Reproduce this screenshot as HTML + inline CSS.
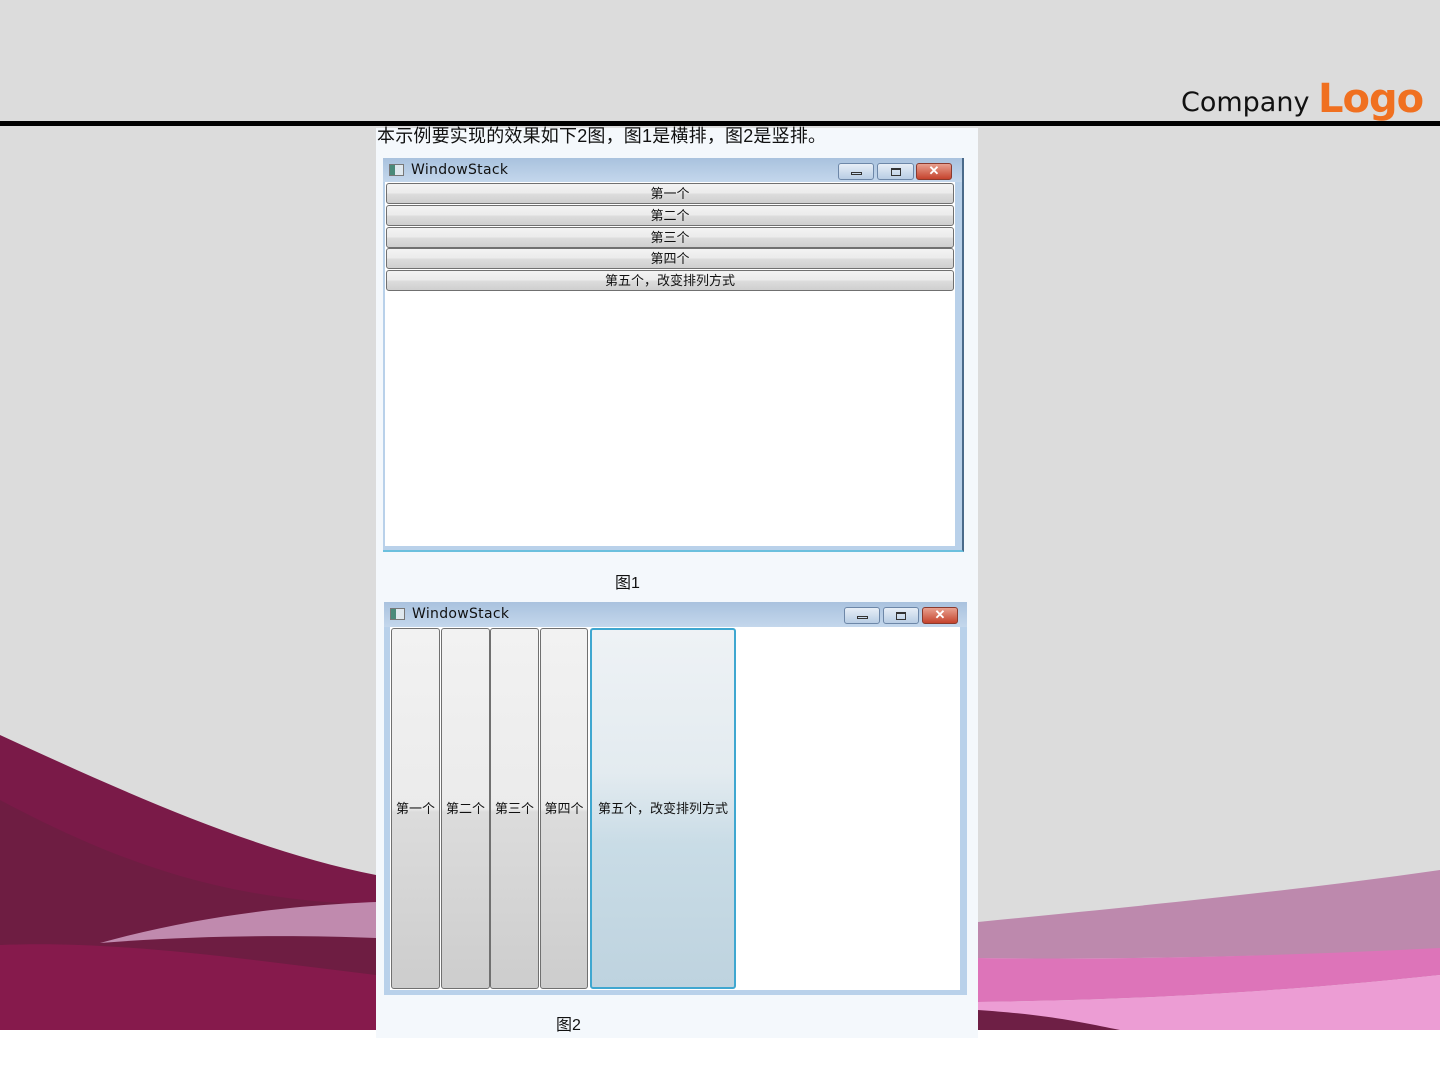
<!DOCTYPE html>
<html><head><meta charset="utf-8">
<style>
*{margin:0;padding:0;box-sizing:border-box}
body{width:1440px;height:1080px;position:relative;background:#fff;overflow:hidden;font-family:"Liberation Sans","Noto Sans CJK SC",sans-serif}
.abs{position:absolute}
.tb{position:absolute;left:0;right:0;top:0;height:24px;background:linear-gradient(#a9c2de,#c4d7ec)}
.ttl{position:absolute;left:28px;top:4px;font-size:14px;color:#111;font-family:"DejaVu Sans","Noto Sans CJK SC",sans-serif;letter-spacing:.3px}
.ico{position:absolute;left:6px;top:6px;width:15px;height:12px;border:1px solid #777;background:linear-gradient(90deg,#4a8a7a 40%,#dfe8ee 40%)}
.cb{position:absolute;top:5px;height:17px;border:1px solid #6d87a8;border-radius:3px;background:linear-gradient(#e7eef7,#b8cde4)}
.cb.x{background:linear-gradient(#e8a08f,#c5432d);border-color:#8a3a2e}
.hb{position:absolute;left:1px;right:1px;height:21px;border:1px solid #707070;border-radius:3px;background:linear-gradient(#f3f3f3 0%,#ebebeb 50%,#dddddd 51%,#cfcfcf 100%);font-size:13px;text-align:center;line-height:19px;color:#111}
.vb{position:absolute;top:1px;bottom:1px;border:1px solid #707070;border-radius:3px;background:linear-gradient(#f2f2f2,#ebebeb 50%,#dcdcdc 51%,#cdcdcd);font-size:13px;line-height:13px;color:#111;display:flex;align-items:center;justify-content:center;white-space:nowrap;overflow:hidden}
</style></head><body>
<div class="abs" style="left:0;top:0;width:1440px;height:1030px;background:#dcdcdc"></div>
<svg class="abs" style="left:0;top:0" width="1440" height="1080">
<path d="M0 735 C120 790 250 850 376 875 L376 1030 L0 1030Z" fill="#7a1a48"/>
<path d="M0 800 C150 880 250 900 376 905 L376 1030 L0 1030Z" fill="#6a2040" opacity=".7"/>
<path d="M100 943 C200 915 300 905 376 902 L376 938 C300 935 200 935 100 943Z" fill="#c08aae"/>
<path d="M0 945 C120 940 250 960 376 975 L376 1030 L0 1030Z" fill="#861a4c"/>
<path d="M978 922 C1150 905 1300 890 1440 870 L1440 950 C1300 955 1150 960 978 958Z" fill="#bd89ad"/>
<path d="M978 958 C1150 960 1300 955 1440 948 L1440 975 C1300 990 1150 1000 978 1002Z" fill="#dd74b9"/>
<path d="M978 1002 C1150 1000 1300 990 1440 975 L1440 1030 L978 1030Z" fill="#ec9dd4"/>
<path d="M978 1010 C1050 1015 1080 1022 1120 1030 L978 1030Z" fill="#6e1f45"/>
</svg>
<div class="abs" style="left:0;top:121px;width:1440px;height:5px;background:#000"></div>
<div class="abs" style="left:1181px;top:87px;font-size:27px;color:#111;font-family:'DejaVu Sans',sans-serif">Company</div>
<div class="abs" style="left:1318px;top:76px;font-size:40px;font-weight:bold;color:#f07020;font-family:'DejaVu Sans',sans-serif;letter-spacing:-1px">Logo</div>
<div class="abs" style="left:376px;top:128px;width:602px;height:910px;background:#f4f8fc"></div>
<div class="abs" style="left:377px;top:125px;font-size:18px;line-height:22px;letter-spacing:.2px;color:#111">本示例要实现的效果如下2图，图1是横排，图2是竖排。</div>

<div class="abs" style="left:383px;top:158px;width:581px;height:394px;background:#b9d1ea;border-right:2px solid #4a6a8a;border-bottom:2px solid #6cc0de">
<div class="tb"></div><div class="ico"></div><div class="ttl">WindowStack</div>
<div class="cb" style="left:455px;width:36px"><div class="abs" style="left:12px;top:8px;width:11px;height:3px;border:1px solid #333"></div></div>
<div class="cb" style="left:494px;width:37px"><div class="abs" style="left:13px;top:4px;width:10px;height:8px;border:1px solid #333;border-top-width:2px"></div></div>
<div class="cb x" style="left:533px;width:36px;color:#fff;font-weight:bold;font-size:13px;text-align:center;line-height:14px">✕</div>
<div class="abs" style="left:2px;top:24px;width:570px;height:364px;background:#fff">
<div class="hb" style="top:1px">第一个</div>
<div class="hb" style="top:23px">第二个</div>
<div class="hb" style="top:45px">第三个</div>
<div class="hb" style="top:66px">第四个</div>
<div class="hb" style="top:88px">第五个，改变排列方式</div>
</div></div>
<div class="abs" style="left:615px;top:569px;font-size:16px;color:#111">图1</div>

<div class="abs" style="left:384px;top:602px;width:583px;height:393px;background:#b9d1ea">
<div class="tb" style="height:25px"></div><div class="ico"></div><div class="ttl">WindowStack</div>
<div class="cb" style="left:460px;width:36px"><div class="abs" style="left:12px;top:8px;width:11px;height:3px;border:1px solid #333"></div></div>
<div class="cb" style="left:499px;width:36px"><div class="abs" style="left:12px;top:4px;width:10px;height:8px;border:1px solid #333;border-top-width:2px"></div></div>
<div class="cb x" style="left:538px;width:36px;color:#fff;font-weight:bold;font-size:13px;text-align:center;line-height:14px">✕</div>
<div class="abs" style="left:6px;top:25px;width:570px;height:363px;background:#fff">
<div class="vb" style="left:1px;width:49px">第一个</div>
<div class="vb" style="left:51px;width:49px">第二个</div>
<div class="vb" style="left:100px;width:49px">第三个</div>
<div class="vb" style="left:150px;width:48px">第四个</div>
<div class="vb" style="left:200px;width:146px;border:2px solid #3fa7d0;background:linear-gradient(#eef2f5,#e3ebf0 40%,#c9dce6 60%,#bed3df)">第五个，改变排列方式</div>
</div></div>
<div class="abs" style="left:556px;top:1011px;font-size:16px;color:#111">图2</div>
</body></html>
